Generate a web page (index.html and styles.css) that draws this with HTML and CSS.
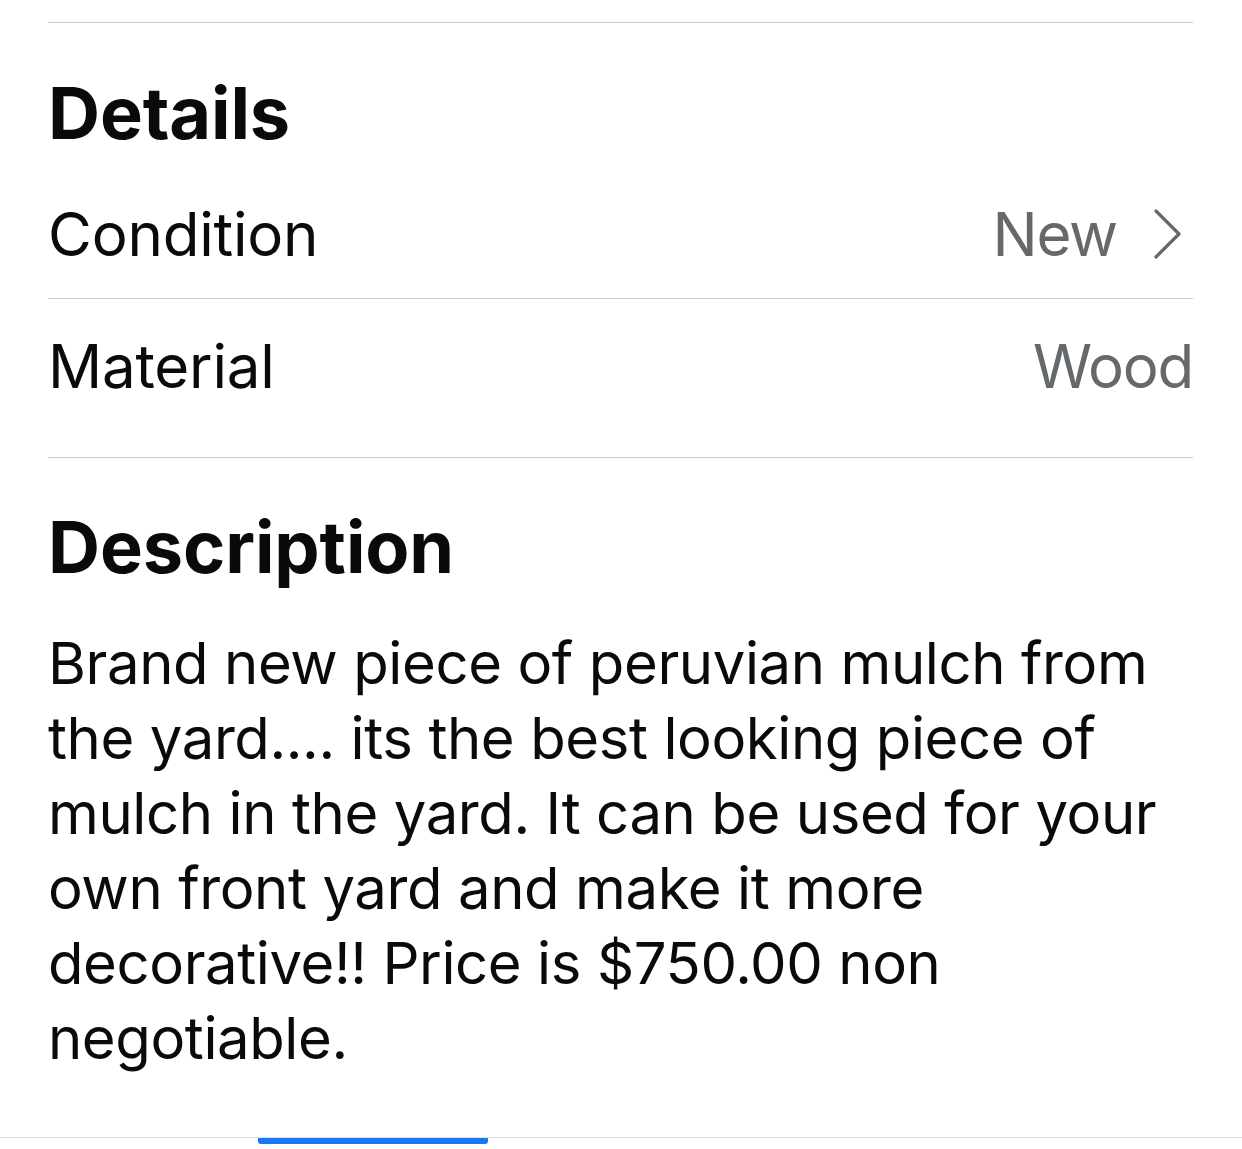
FILE: index.html
```html
<!DOCTYPE html>
<html lang="en">
<head>
<meta charset="utf-8">
<title>Listing details</title>
<link rel="stylesheet" href="styles.css">
</head>
<body>
<main class="page">
  <section class="details">
    <h2 class="section-title">Details</h2>
    <div class="row row-first">
      <span class="row-label">Condition</span>
      <span class="row-value">New
        <svg class="chevron" width="30" height="52" viewBox="0 0 30 52" aria-hidden="true">
          <polyline points="3,3 26,26 3,49" fill="none" stroke="#65696c" stroke-width="3.2" stroke-linecap="round" stroke-linejoin="round"/>
        </svg>
      </span>
    </div>
    <div class="row row-second">
      <span class="row-label">Material</span>
      <span class="row-value">Wood</span>
    </div>
  </section>
  <section class="description">
    <h2 class="section-title">Description</h2>
    <p class="desc-text">Brand new piece of peruvian mulch from the yard.... its the best looking piece of mulch in the yard. It can be used for your own front yard and make it more decorative!! Price is $750.00 non negotiable.</p>
  </section>
</main>
<footer class="tabbar">
  <div class="tab-indicator"></div>
</footer>
</body>
</html>
```
FILE: styles.css
```css
html, body {
  margin: 0;
  padding: 0;
  background: #ffffff;
}
body {
  font-family: Inter, "Noto Sans", sans-serif;
  color: #0a0a0b;
  width: 1242px;
  height: 1149px;
  overflow: hidden;
}
.page {
  padding: 22px 49px 0 48px;
}
.details {
  border-top: 1px solid #cdcdcd;
  padding-top: 47px;
}
.section-title {
  margin: 0;
  font-size: 72px;
  line-height: 86px;
  font-weight: 700;
  letter-spacing: -0.1px;
}
.row {
  display: flex;
  justify-content: space-between;
  align-items: center;
  font-size: 60px;
  line-height: 72px;
  border-bottom: 1px solid #cdcdcd;
}
.row-first {
  padding-top: 42px;
  padding-bottom: 28px;
}
.row-second {
  padding-top: 31px;
  padding-bottom: 55px;
}
.row-label {
  letter-spacing: -0.2px;
}
.row-value {
  display: flex;
  align-items: center;
  gap: 36px;
  color: #65696c;
  letter-spacing: -1.2px;
}
.chevron {
  display: block;
  margin-right: 10px;
}
.description {
  padding-top: 46px;
}
.desc-text {
  margin: 36px 0 0 0;
  font-size: 58px;
  line-height: 75px;
  letter-spacing: -0.4px;
}
.tabbar {
  position: absolute;
  left: 0;
  top: 1137px;
  width: 1242px;
  height: 12px;
  border-top: 1px solid #e1e1e1;
}
.tab-indicator {
  margin-left: 258px;
  width: 230px;
  height: 6px;
  background: #1877f2;
  border-radius: 0 0 3px 3px;
}
```
